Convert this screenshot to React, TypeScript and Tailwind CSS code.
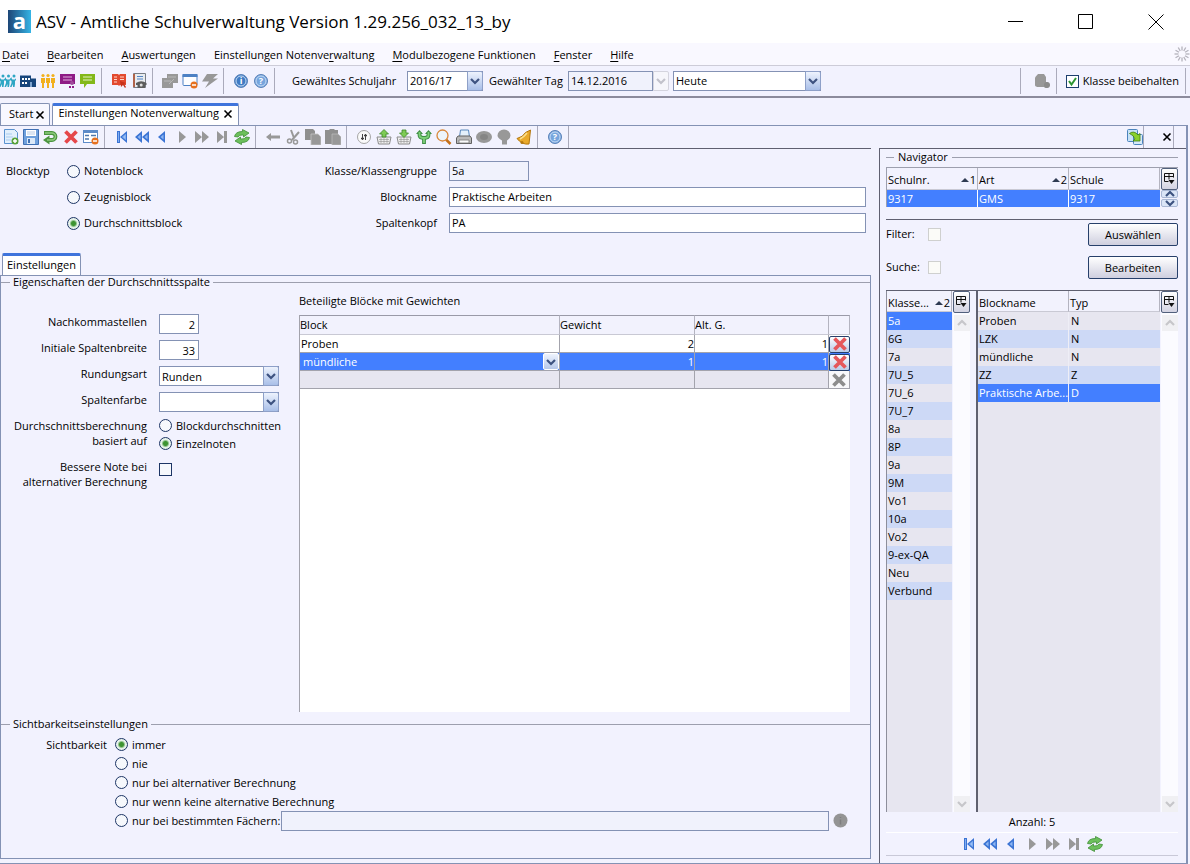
import React from "react";
import clsx from "clsx";

type IconProps = { children: React.ReactNode; size?: number };

function Svg({ children, size = 16 }: IconProps) {
  return (
    <svg width={size} height={size} viewBox="0 0 16 16" fill="none" className="shrink-0">
      {children}
    </svg>
  );
}

const GRAY = "#989898";

/* ---------- main toolbar icons ---------- */

const people = (color: string, wide: boolean) => (
  <Svg>
    {(wide ? [2, 7.5, 13] : [3, 8, 13]).map((x) => (
      <g key={x} fill={color}>
        <circle cx={x + (wide ? 1 : 0)} cy={wide ? 3 : 2.5} r={wide ? 1.5 : 1.6} />
        {wide ? (
          <path d={`M${x - 2} 5l1.500 1.500h2.500L${x + 4} 4v2L${x + 2} 8v3l-.500 3h-1.500v-3l-1.500 3h-1.500l1.500-4V8l-1.500-1z`} />
        ) : (
          <path d={`M${x - 2} 5h4v5h-1v5h-2v-5h-1z`} />
        )}
      </g>
    ))}
  </Svg>
);

const building = (
  <Svg>
    <path d="M0 2.500h11v3h5V14H0z" fill="#17457c" />
    <path d="M2 5h2v2H2zM5 5h2v2H5zM8 5h2v2H8zM2 9h2v2H2zM5 9h2v2H5z" fill="#fff" />
    <path d="M10 9h2v5h-2z" fill="#7ea4cf" />
  </Svg>
);

const board = (
  <Svg>
    <path d="M0 1h15v10H0z" fill="#8e1b86" />
    <path d="M3 4h9M3 7h9" stroke="#e0b0dd" />
    <circle cx="12" cy="10" r="2" fill="#a04c9b" />
    <path d="M9 13h2v2H9zM12 13h2v2h-2z" fill="#8e1b86" />
  </Svg>
);

const chat = (
  <Svg>
    <path d="M0 1h15v10H7l-3 4v-4H0z" fill="#83b81a" />
    <path d="M3 4h9M3 7h9" stroke="#e3f1c3" />
  </Svg>
);

const redBook = (
  <Svg>
    <path d="M1 1h6l1 1 1-1h6v11H9l-1 1-1-1H1z" fill="#e2492f" />
    <path d="M3 4h3M3 6.500h3M3 9h3M9 4h4M9 6.500h4" stroke="#ffd5cb" />
    <path d="M9 8l6 2-2 1 2 3-1 1-2-3-2 2z" fill="#c8321c" />
  </Svg>
);

const phoneBook = (
  <Svg>
    <path d="M2.500 .500h12v14h-12z" fill="#e8ebef" stroke="#777c85" />
    <path d="M2 1h2v13H2z" fill="#b0634a" />
    <path d="M6 3.500h6M6 6h6" stroke="#5384c6" />
    <path d="M5 10q5-3.500 10.500 0v2H14v3H6.500v-3H5z" fill="#5c5c5c" />
    <circle cx="10.200" cy="12" r="1.500" fill="#ddd" />
  </Svg>
);

const grayStack = (
  <Svg>
    <path d="M5 1h11v9h-5v5H0V5h5z" fill={GRAY} />
    <path d="M2 8h7M6 4h8M7 11l5-5" stroke="#b8b8b8" />
  </Svg>
);

const windowRemove = (
  <Svg>
    <rect x="1" y="1.500" width="14" height="11" rx="1" fill="#fdfdff" stroke="#4c80c4" />
    <path d="M.500 1h15v3H.500z" fill="#4c80c4" />
    <circle cx="12" cy="12" r="3.500" fill="#e6701f" />
    <path d="M10 12h4" stroke="#fff" strokeWidth="1.500" />
  </Svg>
);

const bolt = (
  <Svg>
    <path d="M5 1h11l-5 4.500h5L3 15l4-6.500H0z" fill={GRAY} />
  </Svg>
);

const blueCircle = (glyph: string) => (
  <Svg>
    <circle cx="8" cy="8" r="6.500" fill={glyph === "i" ? "#3f7cc4" : "#76a5dd"} stroke="#5a82b8" />
    <circle cx="8" cy="8" r="5" stroke="#c6dbf4" strokeWidth="1" />
    <text x="8" y="11" textAnchor="middle" fontSize="9" fontWeight="bold" fill="#fff">
      {glyph}
    </text>
  </Svg>
);

const grayDatabase = (
  <Svg>
    <path d="M1 5q0-1 3-4h6l2 3v5a3 3 0 1 1-2 5H5q-4 0-4-2z" fill={GRAY} />
    <circle cx="13" cy="12" r="3" fill="#8b8b8b" />
  </Svg>
);

/* ---------- module toolbar icons ---------- */

const newDoc = (
  <Svg>
    <path d="M1.500 .500h10l3 3v11h-13z" fill="#e2effc" stroke="#5b92cf" />
    <path d="M3 5h6M3 8h7M3 11h5" stroke="#a9cbee" />
    <circle cx="12" cy="12" r="3.500" fill="#58a23a" />
    <path d="M12 10v4M10 12h4" stroke="#fff" strokeWidth="1.500" />
  </Svg>
);

const save = (
  <Svg>
    <path d="M.500 .500h15v15H.500z" fill="#6fa0dc" stroke="#3f70b4" />
    <path d="M3 1h10v6H3z" fill="#fff" />
    <path d="M4 3h8M4 5h8" stroke="#b8cbe4" />
    <path d="M4 9h8v6H4z" fill="#dce9f8" />
    <path d="M5 10h2v4H5z" fill="#3f70b4" />
  </Svg>
);

const undo = (
  <Svg>
    <path d="M1 4h8a3.500 3.500 0 0 1 0 7H5" stroke="#4b9440" strokeWidth="3.800" />
    <path d="M6.500 6.500v9L0 11z" fill="#4b9440" />
    <path d="M2 4h7a3.500 3.500 0 0 1 0 7H4" stroke="#8ecb7f" strokeWidth="1.400" />
  </Svg>
);

const cross = (color: string) => (
  <Svg>
    <path d="M2.500 2.500l11 11M13.500 2.500l-11 11" stroke={color} strokeWidth="3.800" />
  </Svg>
);

const formRemove = (
  <Svg>
    <rect x=".5" y="1.500" width="14" height="12" fill="#fff" stroke="#5d8bc8" />
    <path d="M0 1h15v3H0z" fill="#5d8bc8" />
    <path d="M2 6.500h4M8 6.500h5M2 10h4" stroke="#4f78ad" strokeWidth="1.500" />
    <circle cx="12" cy="12" r="3.500" fill="#e6701f" />
    <path d="M10 12h4" stroke="#fff" strokeWidth="1.500" />
  </Svg>
);

const BLUE = "#3b74d4";

const first = (
  <Svg>
    <path d="M3 2h3v12H3zM13 2v12L6 8z" fill={BLUE} />
    <path d="M4.500 3v10M11.500 5.500v5L8.500 8z" fill="#9cc0f5" stroke="#82aef0" />
  </Svg>
);
const rewind = (
  <Svg>
    <path d="M8 2v12L1 8zM15 2v12L8 8z" fill={BLUE} />
    <path d="M6.500 5.500v5L3.500 8zM13.500 5.500v5L10.500 8z" fill="#8db5f2" />
  </Svg>
);
const prev = (
  <Svg>
    <path d="M11 2v12L4 8z" fill={BLUE} />
    <path d="M9.500 5.500v5L6.500 8z" fill="#8db5f2" />
  </Svg>
);
const next = (
  <Svg>
    <path d="M5 2v12l7-6z" fill={GRAY} />
  </Svg>
);
const forward = (
  <Svg>
    <path d="M1 2v12l7-6zM8 2v12l7-6z" fill={GRAY} />
  </Svg>
);
const last = (
  <Svg>
    <path d="M3 2v12l7-6zM10 2h3v12h-3z" fill={GRAY} />
  </Svg>
);
const refresh = (
  <Svg>
    <path d="M.500 7.500q1-5 8-5V.500L15 4l-5.500 4V6Q5 5.500 4 8z" fill="#6cbf5c" stroke="#3f8f36" strokeWidth=".8" />
    <path d="M15.500 8.500q-1 5-8 5v2L1 12l5.500-4v2q4.500.500 5.500-2z" fill="#6cbf5c" stroke="#3f8f36" strokeWidth=".8" />
  </Svg>
);

const grayLeft = (
  <Svg>
    <path d="M1 8l5-4v2.500h9v3H6V12z" fill={GRAY} />
  </Svg>
);
const scissors = (
  <Svg>
    <path d="M6 1l3 8M14 3l-7 8" stroke={GRAY} strokeWidth="2" />
    <circle cx="4.500" cy="12" r="2" stroke={GRAY} strokeWidth="1.500" />
    <circle cx="10.500" cy="13" r="2" stroke={GRAY} strokeWidth="1.500" />
  </Svg>
);
const copy = (
  <Svg>
    <path d="M0 0h8l2 2v9H0z" fill="#8f8f8f" />
    <path d="M6 5h7l3 3v8H6z" fill={GRAY} stroke="#c4c4c4" strokeWidth=".8" />
  </Svg>
);
const paste = (
  <Svg>
    <path d="M0 1h4l1-1h4l1 1h3v14H0z" fill="#8f8f8f" />
    <path d="M7 5h6l3 3v8H7z" fill={GRAY} stroke="#b9b9b9" strokeWidth=".8" />
  </Svg>
);

const sliders = (
  <Svg>
    <circle cx="8" cy="8" r="6.500" fill="#fafafa" stroke="#a5a5a5" />
    <path d="M6.500 5v6M9.500 5v6" stroke="#444" />
    <path d="M5 9.500h3M8 6.500h3" stroke="#444" strokeWidth="1.500" />
  </Svg>
);
const basket = (up: boolean) => (
  <Svg>
    <path d="M1 8h14l-1.500 7h-11z" fill="#efefef" stroke="#8b8b8b" />
    <path d="M3 10.500h10M3 12.500h10M5 9v5M8 9v5M11 9v5" stroke="#909090" strokeWidth=".6" />
    <path
      d={up ? "M8 .500L12.500 5H10v3H6V5H3.500z" : "M8 8.500L12.500 4H10V1H6v3H3.500z"}
      fill="#7ecb55"
      stroke="#3d8628"
      strokeWidth=".8"
    />
  </Svg>
);
const fork = (
  <Svg>
    <path d="M3.500 3v3q0 3 4.500 3t4.500-3V3M8 8v7" stroke="#3f8f45" strokeWidth="3.800" />
    <path d="M0 5l3.500-4L7 5zM9 5l3.500-4L16 5z" fill="#3f8f45" />
    <path d="M3.500 3v3q0 3 4.500 3t4.500-3V3M8 8v6" stroke="#7dcf78" strokeWidth="1.800" />
  </Svg>
);
const magnifier = (
  <Svg>
    <path d="M9.500 10l5 5" stroke="#c67018" strokeWidth="2.500" />
    <circle cx="6.500" cy="6.500" r="5.500" fill="#edf5fb" stroke="#d9883a" strokeWidth="1.300" />
  </Svg>
);
const printer = (
  <Svg>
    <path d="M4.500 1h8l1 7h-10z" fill="#e4f0fb" stroke="#5988bd" />
    <path d="M2 7h12l1.500 2v5.500H.500V9z" fill="#b9b9b9" stroke="#626262" />
    <path d="M3 11h10v3H3z" fill="#fafafa" stroke="#777" strokeWidth=".8" />
  </Svg>
);
const grayEye = (
  <Svg>
    <ellipse cx="8" cy="8" rx="8" ry="6" fill={GRAY} />
    <ellipse cx="8" cy="8" rx="4" ry="3" fill="#858585" />
  </Svg>
);
const grayBulb = (
  <Svg>
    <path d="M8 .500a6.500 6 0 0 1 6.500 6q0 2.500-3.500 5v4H6v-4q-4.500-2.500-4.500-5a6.500 6 0 0 1 6.500-6z" fill={GRAY} />
  </Svg>
);
const bell = (
  <Svg>
    <path d="M14.500 1L13 15Q6 16 1 9.500 7 8 9.500 3.500z" fill="#e9a92a" stroke="#b3760c" />
    <path d="M11 4q-3 4-7 6" stroke="#fbdf8c" strokeWidth="1.500" />
    <circle cx="6" cy="13.500" r="1.500" fill="#b3760c" />
  </Svg>
);
const swap = (
  <Svg>
    <rect x=".5" y=".5" width="10" height="12" rx="1" fill="#c7e2f6" stroke="#4b83bd" />
    <rect x="6.500" y="5.500" width="9" height="10" rx="1" fill="#d6e9f8" stroke="#4b83bd" />
    <path d="M2.500 4.500Q7 1 11 6l2-1.500v7.500H6l2-2Q6.500 6 2.500 4.500z" fill="#8ad12c" stroke="#3f7d10" strokeWidth=".8" />
  </Svg>
);

const spinner = (
  <Svg>
    {[0, 30, 60, 90, 120, 150, 180, 210, 240, 270, 300, 330].map((angle) => (
      <path
        key={angle}
        d="M8 .500v4"
        stroke="#b4b2bc"
        strokeWidth="1.300"
        transform={`rotate(${angle} 8 8)`}
      />
    ))}
  </Svg>
);

const chevron = (color: string, up = false) => (
  <svg width="10" height="8" viewBox="0 0 10 8" fill="none">
    <path d={up ? "M1 6l4-4 4 4" : "M1 2l4 4 4-4"} stroke={color} strokeWidth="2.200" />
  </svg>
);

/* ---------- small building blocks ---------- */

type Tool = { label: string; icon: React.ReactNode };

function ToolGroup({ tools, className }: { tools: Tool[]; className?: string }) {
  return (
    <div className={clsx("flex", className)}>
      {tools.map((tool) => (
        <button key={tool.label} type="button" aria-label={tool.label} className="flex w-5 items-center">
          {tool.icon}
        </button>
      ))}
    </div>
  );
}

function Separator() {
  return <div className="mr-[9px] ml-px w-px self-stretch bg-[#aaaabb]" />;
}

type ComboProps = { id: string; value: string; label?: string; className?: string };

function Combo({ id, value, label, className }: ComboProps) {
  return (
    <div className={clsx("relative h-5", className)}>
      <select
        id={id}
        aria-label={label}
        defaultValue={value}
        className="h-5 w-full appearance-none border border-[#8492b4] bg-white pl-0.5 text-black outline-none"
      >
        <option value={value}>{value}</option>
      </select>
      <span className="pointer-events-none absolute top-0 right-0 flex h-5 w-4 items-center justify-center rounded-r-xs border border-[#8ea0c8] bg-linear-to-b from-[#eef3fd] to-[#a9bfe8]">
        {chevron("#3d5280")}
      </span>
    </div>
  );
}

type RadioProps = { name: string; label: string; checked?: boolean };

function Radio({ name, label, checked }: RadioProps) {
  return (
    <label className="flex items-center gap-1">
      <input
        type="radio"
        name={name}
        defaultChecked={checked}
        className="size-[13px] shrink-0 appearance-none rounded-full border border-[#1d3565] bg-[#f6f8fc] checked:bg-[radial-gradient(circle,#3e9432_0_2px,#e6f2ea_4px)]"
      />
      {label}
    </label>
  );
}

function ColumnControl() {
  return (
    <button
      type="button"
      aria-label="Spalten"
      className="flex h-[22px] w-full items-center justify-center rounded-xs border border-[#51607c] bg-linear-to-b from-white to-[#d3d3e2]"
    >
      <svg width="11" height="12" viewBox="0 0 11 12" fill="none" stroke="#111">
        <path d="M4.500 8.500h-4v-8h9v4M.500 3.500h9M5 .500v6" />
        <path d="M4.500 7h6L7.500 11z" fill="#111" stroke="none" />
      </svg>
    </button>
  );
}

function ScrollColumn() {
  return (
    <div className="flex flex-1 flex-col items-center justify-between bg-[#fbfbff] pt-0.5">
      <span className="flex size-4 items-center justify-center bg-[#f0f0f3]">{chevron("#c6c6ca", true)}</span>
      <span className="flex size-4 items-center justify-center bg-[#f0f0f3]">{chevron("#c6c6ca")}</span>
    </div>
  );
}

function Sort({ order }: { order: number }) {
  return (
    <span className="flex items-center gap-px">
      <svg width="8" height="4" viewBox="0 0 8 4">
        <path d="M4 0l4 4H0z" fill="#2f3b52" />
      </svg>
      {order}
    </span>
  );
}

/* ---------- data ---------- */

const menu = [
  ["", "D", "atei"],
  ["", "B", "earbeiten"],
  ["", "A", "uswertungen"],
  ["Einstellungen Notenve", "r", "waltung"],
  ["", "M", "odulbezogene Funktionen"],
  ["", "F", "enster"],
  ["", "H", "ilfe"],
];

const mainTools: Tool[][] = [
  [
    { label: "Schüler", icon: people("#2ea6c4", true) },
    { label: "Schulen", icon: building },
    { label: "Lehrkräfte", icon: people("#f2b01e", false) },
    { label: "Unterricht", icon: board },
    { label: "Nachrichten", icon: chat },
  ],
  [
    { label: "Notenbuch", icon: redBook },
    { label: "Adressbuch", icon: phoneBook },
  ],
  [
    { label: "Module", icon: grayStack },
    { label: "Fenster schließen", icon: windowRemove },
    { label: "Aktion", icon: bolt },
  ],
  [
    { label: "Info", icon: blueCircle("i") },
    { label: "Hilfe", icon: blueCircle("?") },
  ],
];

const navTools: Tool[] = [
  { label: "Erster", icon: first },
  { label: "Zurückblättern", icon: rewind },
  { label: "Vorheriger", icon: prev },
  { label: "Nächster", icon: next },
  { label: "Vorblättern", icon: forward },
  { label: "Letzter", icon: last },
  { label: "Aktualisieren", icon: refresh },
];

const moduleTools: Tool[][] = [
  [
    { label: "Neu", icon: newDoc },
    { label: "Speichern", icon: save },
    { label: "Rückgängig", icon: undo },
    { label: "Löschen", icon: cross("#e5484b") },
    { label: "Formular schließen", icon: formRemove },
  ],
  navTools,
  [
    { label: "Zurück", icon: grayLeft },
    { label: "Ausschneiden", icon: scissors },
    { label: "Kopieren", icon: copy },
    { label: "Einfügen", icon: paste },
  ],
  [
    { label: "Optionen", icon: sliders },
    { label: "Aus Korb", icon: basket(true) },
    { label: "In Korb", icon: basket(false) },
    { label: "Verzweigen", icon: fork },
    { label: "Suchen", icon: magnifier },
    { label: "Drucken", icon: printer },
    { label: "Ansicht", icon: grayEye },
    { label: "Hinweis", icon: grayBulb },
    { label: "Erinnerung", icon: bell },
  ],
  [{ label: "Modulhilfe", icon: blueCircle("?") }],
];

const klassen = [
  "5a", "6G", "7a", "7U_5", "7U_6", "7U_7", "8a", "8P",
  "9a", "9M", "Vo1", "10a", "Vo2", "9-ex-QA", "Neu", "Verbund",
];

const bloecke = [
  ["Proben", "N"],
  ["LZK", "N"],
  ["mündliche", "N"],
  ["ZZ", "Z"],
  ["Praktische Arbe...", "D"],
];

const sichtbarkeit = ["immer", "nie", "nur bei alternativer Berechnung", "nur wenn keine alternative Berechnung"];

/* ---------- page parts ---------- */

function TitleBar() {
  return (
    <header className="flex h-[43px] items-center justify-between bg-white pr-[26px] pl-2">
      <div className="flex items-center gap-[5px]">
        <div className="flex size-[23px] items-center justify-center bg-linear-to-r from-[#1d4677] to-[#35b5e6]">
          <span className="pb-1 text-[22px] leading-8 font-bold text-white">a</span>
        </div>
        <h1 className="text-[17px] leading-6">ASV - Amtliche Schulverwaltung Version 1.29.256_032_13_by</h1>
      </div>
      <div className="flex items-center gap-[54px]">
        <button type="button" aria-label="Minimieren">
          <Svg>
            <path d="M0 7.500h15" stroke="#000" />
          </Svg>
        </button>
        <button type="button" aria-label="Maximieren">
          <Svg>
            <path d="M.500 .500h14v14H.500z" stroke="#000" />
          </Svg>
        </button>
        <button type="button" aria-label="Schließen">
          <Svg>
            <path d="M.500 .500l15 15M15.500 .500l-15 15" stroke="#000" />
          </Svg>
        </button>
      </div>
    </header>
  );
}

function MenuBar() {
  return (
    <nav className="flex h-[23px] items-center justify-between overflow-hidden border-b border-[#cdccd8] bg-[#f9f8ff] pl-0.5">
      <div className="flex gap-[18px] pt-0.5">
        {menu.map(([before, key, after]) => (
          <button key={key} type="button" className="whitespace-nowrap">
            {before}
            <span className="underline underline-offset-2">{key}</span>
            {after}
          </button>
        ))}
      </div>
      {spinner}
    </nav>
  );
}

function MainToolbar() {
  return (
    <div className="flex h-8 items-center justify-between border-b-2 border-[#8c8b9c] pt-0.5 pr-1 pb-0.5">
      <div className="flex items-center self-stretch">
        {mainTools.map((tools, i) => (
          <React.Fragment key={i}>
            <ToolGroup tools={tools} />
            <Separator />
          </React.Fragment>
        ))}
        <label htmlFor="schuljahr" className="ml-2 w-[115px] whitespace-nowrap">
          Gewähltes Schuljahr
        </label>
        <Combo id="schuljahr" value="2016/17" className="w-[76px]" />
        <label htmlFor="tag" className="ml-1.5 w-[79px] whitespace-nowrap">
          Gewählter Tag
        </label>
        <input
          id="tag"
          readOnly
          defaultValue="14.12.2016"
          className="h-5 w-[85px] border border-[#8492b4] bg-[#f0f2fc] px-0.5 pb-0.5"
        />
        <button
          type="button"
          disabled
          aria-label="Kalender"
          className="flex h-5 w-4 items-center justify-center rounded-r-xs border border-[#d4d4de] bg-[#f6f6fb]"
        >
          {chevron("#c2c2cb")}
        </button>
        <Combo id="heute" label="Tagesauswahl" value="Heute" className="ml-1 w-[148px]" />
      </div>
      <div className="flex items-center self-stretch">
        <Separator />
        <button type="button" aria-label="Datenbank" className="flex w-[25px] items-center justify-center">
          {grayDatabase}
        </button>
        <Separator />
        <label className="flex items-center gap-1 whitespace-nowrap">
          <span className="relative flex size-[13px]">
            <input
              type="checkbox"
              defaultChecked
              className="size-[13px] appearance-none border border-[#1d3f6e] bg-white"
            />
            <svg width="13" height="13" viewBox="0 0 13 13" className="pointer-events-none absolute inset-0">
              <path d="M3 6l2.500 3.500L10 3" fill="none" stroke="#2d9632" strokeWidth="2" />
            </svg>
          </span>
          Klasse beibehalten
        </label>
        <div className="ml-1.5 w-px self-stretch bg-[#aaaabb]" />
      </div>
    </div>
  );
}

function ModuleTabs() {
  return (
    <div className="flex h-[27px] items-end gap-0.5" role="tablist">
      <div className="flex h-[22px] items-center gap-0.5 rounded-t-xs border border-b-0 border-[#8492b4] bg-[#f8f8ff] pr-1 pl-2">
        <button type="button" role="tab">
          Start
        </button>
        <button type="button" aria-label="Start schließen">
          <CloseMark />
        </button>
      </div>
      <div className="flex h-[22px] items-center gap-1 rounded-t-xs border border-t-3 border-b-0 border-[#8492b4] border-t-[#3f74dc] bg-white pr-[5px] pb-1 pl-[5px]">
        <button type="button" role="tab" aria-selected className="whitespace-nowrap">
          Einstellungen Notenverwaltung
        </button>
        <button type="button" aria-label="Einstellungen Notenverwaltung schließen">
          <CloseMark />
        </button>
      </div>
    </div>
  );
}

function CloseMark() {
  return (
    <svg width="10" height="10" viewBox="0 0 10 10">
      <path d="M1.500 1.500l7 7M8.500 1.500l-7 7" stroke="#000" strokeWidth="1.600" />
    </svg>
  );
}

function ModuleToolbar() {
  return (
    <div className="flex h-[22px] justify-between pr-1 pl-[3px]">
      <div className="flex items-center">
        {moduleTools.map((tools, i) => (
          <React.Fragment key={i}>
            <ToolGroup tools={tools} />
            <Separator />
          </React.Fragment>
        ))}
      </div>
      <div className="flex items-center">
        <button type="button" aria-label="Ansicht wechseln">
          {swap}
        </button>
        <div className="w-px self-stretch bg-[#aaaabb]" />
        <button type="button" aria-label="Modul schließen" className="flex w-[29px] justify-center pl-4">
          <CloseMark />
        </button>
        <div className="w-px self-stretch bg-[#aaaabb]" />
        <div className="w-2" />
      </div>
    </div>
  );
}

function BlockForm() {
  const field = "h-5 border border-[#8492b4] px-0.5";
  return (
    <div className="flex pt-3 pr-[5px] pb-5 pl-1.5">
      <div className="flex">
        <span className="w-[61px] leading-5">Blocktyp</span>
        <div className="flex flex-col gap-1.5 leading-5">
          <Radio name="blocktyp" label="Notenblock" />
          <Radio name="blocktyp" label="Zeugnisblock" />
          <Radio name="blocktyp" label="Durchschnittsblock" checked />
        </div>
      </div>
      <div className="ml-auto grid w-[683px] max-w-full grid-cols-[254px_1fr] gap-x-3 gap-y-1.5 text-right leading-5">
        <label htmlFor="klasse">Klasse/Klassengruppe</label>
        <input id="klasse" readOnly defaultValue="5a" className={clsx(field, "w-20 bg-[#f0f2fc]")} />
        <label htmlFor="blockname">Blockname</label>
        <input id="blockname" defaultValue="Praktische Arbeiten" className={clsx(field, "w-full bg-white")} />
        <label htmlFor="spaltenkopf">Spaltenkopf</label>
        <input id="spaltenkopf" defaultValue="PA" className={clsx(field, "w-full bg-white")} />
      </div>
    </div>
  );
}

function SpaltenForm() {
  const number = "h-5 w-10 border border-[#8492b4] bg-white pr-[3px] pl-1 text-right";
  return (
    <div className="grid w-[298px] shrink-0 grid-cols-[146px_1fr] content-start gap-x-3 gap-y-1.5 pt-[26px] leading-[15px]">
      <label htmlFor="nachkomma" className="text-right">
        Nachkommastellen
      </label>
      <input id="nachkomma" defaultValue="2" className={number} />
      <label htmlFor="breite" className="text-right">
        Initiale Spaltenbreite
      </label>
      <input id="breite" defaultValue="33" className={number} />
      <label htmlFor="rundung" className="text-right">
        Rundungsart
      </label>
      <Combo id="rundung" value="Runden" className="w-[120px]" />
      <label htmlFor="farbe" className="text-right">
        Spaltenfarbe
      </label>
      <Combo id="farbe" value="" className="w-[120px]" />
      <span className="text-right">
        Durchschnittsberechnung
        <br />
        basiert auf
      </span>
      <div className="flex flex-col gap-[3px]">
        <Radio name="basis" label="Blockdurchschnitten" />
        <Radio name="basis" label="Einzelnoten" checked />
      </div>
      <label htmlFor="bessere" className="pt-0.5 text-right">
        Bessere Note bei
        <br />
        alternativer Berechnung
      </label>
      <div className="pt-1.5">
        <input
          id="bessere"
          type="checkbox"
          className="block size-[13px] appearance-none border border-[#1d3565] bg-[#f6f8fc]"
        />
      </div>
    </div>
  );
}

function BlockTable() {
  const cell = "border-r border-b border-[#a3a3ac]";
  const head = "border-y border-t-[#9a9aa8] border-b-[#c9c9d4] border-r border-r-[#b4b4c0] pt-px text-left font-normal";
  const deleteButton =
    "flex h-[17px] w-full items-center justify-center rounded-xs border border-[#27406b] bg-linear-to-b from-white to-[#b9cbe8]";
  return (
    <div className="flex min-w-0 flex-1 flex-col pr-5 pb-1">
      <h2 className="mt-[5px] mb-1.5 leading-4">Beteiligte Blöcke mit Gewichten</h2>
      <div className="min-h-96 flex-1 border-l border-[#a3a3ac] bg-white">
        <table className="w-full table-fixed border-separate border-spacing-0">
          <colgroup>
            <col />
            <col className="w-[135px]" />
            <col className="w-[134px]" />
            <col className="w-[21px]" />
          </colgroup>
          <thead className="bg-[#f2f2fd]">
            <tr className="h-5">
              <th className={head}>Block</th>
              <th className={head}>Gewicht</th>
              <th className={head}>Alt. G.</th>
              <th className={head} aria-label="Löschen" />
            </tr>
          </thead>
          <tbody className="leading-[17px]">
            <tr className="h-[18px]">
              <td className={clsx(cell, "pl-px")}>Proben</td>
              <td className={clsx(cell, "text-right")}>2</td>
              <td className={clsx(cell, "text-right")}>1</td>
              <td>
                <button type="button" aria-label="Proben löschen" className={deleteButton}>
                  {cross("#e5585b")}
                </button>
              </td>
            </tr>
            <tr className="h-[18px] bg-[#437fff] text-white">
              <td className={cell}>
                <div className="relative">
                  <select
                    aria-label="Block"
                    defaultValue="mündliche"
                    className="block h-[17px] w-full appearance-none bg-[#437fff] pl-[3px] text-white"
                  >
                    <option>mündliche</option>
                  </select>
                  <span className="pointer-events-none absolute top-0 right-0 flex h-[17px] w-4 items-center justify-center rounded-xs border border-white bg-linear-to-b from-[#eef3fd] to-[#b6c8ea]">
                    {chevron("#3d5280")}
                  </span>
                </div>
              </td>
              <td className={clsx(cell, "text-right")}>1</td>
              <td className={clsx(cell, "text-right")}>1</td>
              <td>
                <button type="button" aria-label="mündliche löschen" className={deleteButton}>
                  {cross("#e5585b")}
                </button>
              </td>
            </tr>
            <tr className="h-[18px] bg-[#e7e6f0]">
              <td className={cell} />
              <td className={cell} />
              <td className={cell} />
              <td className={clsx(cell, "bg-[#f8f8fb]")}>
                <button type="button" disabled aria-label="Löschen" className="flex h-[17px] w-full items-center justify-center">
                  {cross("#8d8d8d")}
                </button>
              </td>
            </tr>
          </tbody>
        </table>
      </div>
    </div>
  );
}

function Sichtbarkeit() {
  return (
    <fieldset className="min-w-0 border-t border-[#9d9fae] pb-7">
      <legend className="ml-[9px] px-[3px] leading-4">Sichtbarkeitseinstellungen</legend>
      <div className="flex pt-[3px] leading-[19px]">
        <span className="w-[106px] shrink-0 text-right">Sichtbarkeit</span>
        <div className="ml-2 flex-1">
          {sichtbarkeit.map((label, i) => (
            <Radio key={label} name="sichtbarkeit" label={label} checked={i === 0} />
          ))}
          <div className="flex h-[19px] items-center">
            <Radio name="sichtbarkeit" label="nur bei bestimmten Fächern:" />
            <input
              aria-label="Fächer"
              readOnly
              className="ml-px h-5 min-w-0 flex-1 border border-[#8492b4] bg-[#f0f2fc]"
            />
            <button type="button" aria-label="Fächer wählen" className="mr-[22px] ml-1">
              <svg width="15" height="15" viewBox="0 0 15 15">
                <circle cx="7.500" cy="7.500" r="7" fill="#949494" />
                <path d="M7.500 4v1M7.500 6.500v5" stroke="#7f7f7f" strokeWidth="1.500" />
              </svg>
            </button>
          </div>
        </div>
      </div>
    </fieldset>
  );
}

function Editor() {
  return (
    <section className="flex min-w-0 flex-1 flex-col border-t border-[#5f6070] pb-1">
      <BlockForm />
      <div className="flex pl-0.5">
        <button
          type="button"
          role="tab"
          aria-selected
          className="h-[22px] rounded-t-xs border border-t-3 border-b-0 border-[#8492b4] border-t-[#3f74dc] bg-white px-1"
        >
          Einstellungen
        </button>
      </div>
      <div className="flex flex-1 flex-col border border-[#8492b4]">
        <fieldset className="flex min-w-0 flex-1 flex-col border-t border-[#9d9fae]">
          <legend className="ml-[9px] px-[3px] leading-3">Eigenschaften der Durchschnittsspalte</legend>
          <div className="flex flex-1">
            <SpaltenForm />
            <BlockTable />
          </div>
        </fieldset>
        <Sichtbarkeit />
      </div>
    </section>
  );
}

function Navigator() {
  const th = "border-r border-r-[#b4b4c0] border-b border-b-[#c9c9d4] px-px pt-[3px] text-left leading-4 font-normal";
  const pushButton =
    "h-[23px] w-[90px] rounded-xs border border-[#27406b] bg-linear-to-b from-white to-[#cfcfdf] pt-px";
  const smallBox = "size-[13px] appearance-none border border-[#cfd0cf] bg-[#fbfbf8]";
  return (
    <aside className="flex w-[307px] shrink-0 flex-col border-t border-l border-[#5f6070] pr-2 pl-1.5">
      <fieldset className="flex min-w-0 flex-1 flex-col border-t border-[#9d9fae]">
        <legend className="ml-2 px-1 leading-4">Navigator</legend>

        <div className="mt-0.5 flex border-t border-[#9d9fae]">
          <table className="w-full min-w-0 table-fixed border-separate border-spacing-0 border-l border-[#9d9fae]">
            <thead>
              <tr className="h-[22px]">
                <th className={th}>
                  <div className="flex justify-between">Schulnr. <Sort order={1} /></div>
                </th>
                <th className={th}>
                  <div className="flex justify-between">Art <Sort order={2} /></div>
                </th>
                <th className={th}>Schule</th>
              </tr>
            </thead>
            <tbody>
              <tr className="h-[17px] bg-[#437fff] leading-4 text-white">
                <td className="border-r border-white pl-px">9317</td>
                <td className="border-r border-white pl-px">GMS</td>
                <td className="pl-px">9317</td>
              </tr>
            </tbody>
          </table>
          <div className="w-[18px] shrink-0 pl-px">
            <ColumnControl />
            <button type="button" aria-label="Nach oben" className="flex h-2 w-full items-center justify-center rounded-xs border border-[#a9b7d4] bg-[#dbe5f7]">
              {chevron("#3d5280", true)}
            </button>
            <button type="button" aria-label="Nach unten" className="mt-px flex h-2 w-full items-center justify-center rounded-xs border border-[#a9b7d4] bg-[#dbe5f7]">
              {chevron("#3d5280")}
            </button>
          </div>
        </div>

        <div className="mt-3 flex flex-col gap-2.5 border-t border-[#5f6070] pt-[3px] pb-[11px]">
          <div className="flex items-center">
            <label htmlFor="filter" className="w-[42px]">Filter:</label>
            <input id="filter" type="checkbox" disabled className={smallBox} />
            <button type="button" className={clsx(pushButton, "ml-auto")}>Auswählen</button>
          </div>
          <div className="flex items-center">
            <label htmlFor="suche" className="w-[42px]">Suche:</label>
            <input id="suche" type="checkbox" disabled className={smallBox} />
            <button type="button" className={clsx(pushButton, "ml-auto")}>Bearbeiten</button>
          </div>
        </div>

        <div className="flex flex-1 border-t border-[#5f6070]">
          <div className="flex w-[85px]">
            <div className="w-[66px] border-l border-[#8d8e9b] bg-[#e7e6f0]">
              <table className="w-full border-separate border-spacing-0">
                <thead className="bg-[#f2f2fd]">
                  <tr className="h-[21px]">
                    <th className={th}>
                      <div className="flex justify-between">Klasse... <Sort order={2} /></div>
                    </th>
                  </tr>
                </thead>
                <tbody>
                  {klassen.map((klasse, i) => (
                    <tr
                      key={klasse}
                      className={clsx(
                        "h-[18px] leading-[18px]",
                        i === 0 ? "bg-[#437fff] text-white" : i % 2 === 1 ? "bg-[#cdd9f6]" : "bg-[#e7e6f0]",
                      )}
                    >
                      <td className="pl-px">{klasse}</td>
                    </tr>
                  ))}
                </tbody>
              </table>
            </div>
            <div className="flex w-[18px] flex-col pl-px">
              <ColumnControl />
              <ScrollColumn />
            </div>
          </div>
          <div className="ml-[5px] flex flex-1 border-l-2 border-[#5f6070]">
            <div className="flex-1 bg-[#e7e6f0]">
              <table className="w-full table-fixed border-separate border-spacing-0">
                <thead className="bg-[#f2f2fd]">
                  <tr className="h-[21px]">
                    <th className={th}>Blockname</th>
                    <th className={th}>Typ</th>
                  </tr>
                </thead>
                <tbody>
                  {bloecke.map(([name, typ], i) => (
                    <tr
                      key={name}
                      className={clsx(
                        "h-[18px] leading-[18px] whitespace-nowrap",
                        i === 4 ? "bg-[#437fff] text-white" : i % 2 === 1 ? "bg-[#cdd9f6]" : "bg-[#e7e6f0]",
                      )}
                    >
                      <td className="border-r border-[#eeeef6] pl-px">{name}</td>
                      <td className="pl-0.5">{typ}</td>
                    </tr>
                  ))}
                </tbody>
              </table>
            </div>
            <div className="flex w-[18px] flex-col pl-px">
              <ColumnControl />
              <ScrollColumn />
            </div>
          </div>
        </div>

        <p className="py-0.5 text-center leading-4">Anzahl: 5</p>
        <div className="mb-[7px] flex h-6 items-center justify-center border-t border-b border-t-white border-b-[#c9c9d8]">
          <ToolGroup tools={navTools} className="gap-px pl-1" />
        </div>
      </fieldset>
    </aside>
  );
}

export default function App() {
  return (
    <div className="flex min-h-screen flex-col bg-[#f2f2fe] font-['Open_Sans','Noto_Sans',sans-serif] text-[11px] text-black">
      <TitleBar />
      <MenuBar />
      <MainToolbar />
      <ModuleTabs />
      <main className="mr-0.5 flex flex-1 flex-col border-t border-r-2 border-b border-[#8492b4]">
        <ModuleToolbar />
        <div className="flex flex-1 gap-2">
          <Editor />
          <Navigator />
        </div>
      </main>
    </div>
  );
}
